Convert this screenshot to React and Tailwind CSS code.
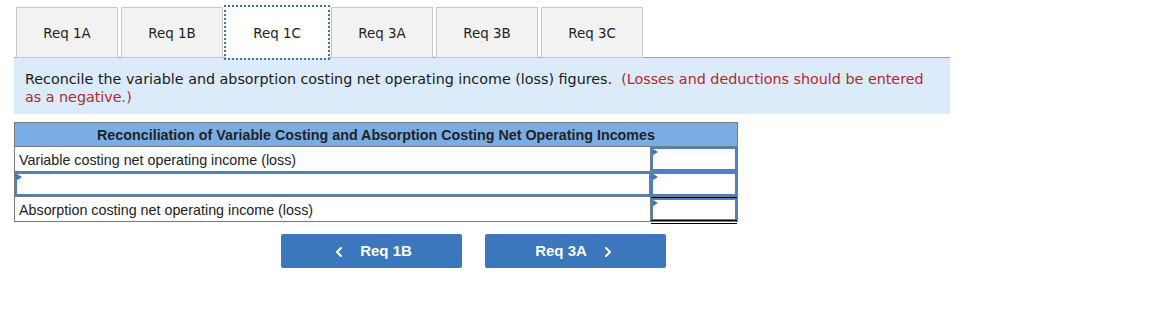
import React from 'react'
import { ChevronLeft, ChevronRight } from 'lucide-react'

const tabs = ['Req 1A', 'Req 1B', 'Req 1C', 'Req 3A', 'Req 3B', 'Req 3C']

const Marker = () => (
    <span className="absolute left-0 top-0 w-0 h-0 border-y-[3px] border-y-transparent border-l-[5px] border-l-[#3a74bd]" />
)

const InputCell = ({ total }) => (
    <div className={`relative h-full ${total ? 'border-t border-t-black' : ''}`}>
        <div className="relative h-full border-2 border-[#4c80c2]">
            <Marker />
        </div>
        {total ? <div className="absolute left-0 right-0 -bottom-[3px] h-[4px] border-y border-black" /> : null}
    </div>
)

const App = () => {
    return (
        <div className="w-[1173px] h-[316px] bg-white px-[14px] pt-[7px]" style={{ fontFamily: '"DejaVu Sans", Verdana, sans-serif' }}>
            <div className="flex gap-[3px] pl-[2px] border-b border-[#a3a3a3] w-[936px]">
                {tabs.map((t) => (
                    t === 'Req 1C' ? (
                        <div key={t} className="w-[102px] h-[51px] -mb-px pt-[3px] bg-white outline-2 outline-dotted outline-[#3a74bd] flex items-center justify-center text-[13.4px] text-[#222]">
                            {t}
                        </div>
                    ) : (
                        <div key={t} className="w-[102px] h-[51px] -mb-px pt-[3px] bg-[#f2f2f2] border border-[#c8c8c8] flex items-center justify-center text-[13.4px] text-[#222]">
                            {t}
                        </div>
                    )
                ))}
            </div>

            <div className="w-[936px] bg-[#dbebf9] pl-[11px] pr-3 pt-[12px] pb-[8px] text-[14.3px] leading-[18px] text-[#1a1a1a]">
                Reconcile the variable and absorption costing net operating income (loss) figures.&nbsp;&nbsp;<span className="text-[#b8262b]">(Losses and deductions should be entered as a negative.)</span>
            </div>

            <div className="mt-2 w-[724px] border border-[#7a7a7a]" style={{ fontFamily: '"Liberation Sans", Arial, sans-serif' }}>
                <div className="h-[24px] pt-[2px] bg-[#7badE5] border-b border-[#7a7a7a] flex items-center justify-center text-[14.3px] font-bold text-[#222]">
                    Reconciliation of Variable Costing and Absorption Costing Net Operating Incomes
                </div>
                <div className="grid grid-cols-[636px_1fr] h-[25px] border-b border-[#7a7a7a]">
                    <div className="border-r border-[#7a7a7a] pl-[4px] pt-[3px] flex items-center text-[14.3px] text-[#222]">
                        Variable costing net operating income (loss)
                    </div>
                    <InputCell />
                </div>
                <div className="grid grid-cols-[636px_1fr] h-[25px] border-b border-[#7a7a7a]">
                    <div className="relative border-2 border-[#4c80c2]">
                        <Marker />
                    </div>
                    <InputCell />
                </div>
                <div className="grid grid-cols-[636px_1fr] h-[24px]">
                    <div className="border-r border-[#7a7a7a] pl-[4px] pt-[3px] flex items-center text-[14.3px] text-[#222]">
                        Absorption costing net operating income (loss)
                    </div>
                    <InputCell total />
                </div>
            </div>

            <div className="flex gap-[23px] mt-[12px] ml-[267px]" style={{ fontFamily: '"Liberation Sans", Arial, sans-serif' }}>
                <button className="w-[181px] h-[34px] pt-px bg-[#3a77bd] rounded-[2px] text-white font-bold text-[15px] flex items-center justify-center gap-[13px]">
                    <ChevronLeft size={16} strokeWidth={3} />
                    <span>Req 1B</span>
                </button>
                <button className="w-[181px] h-[34px] pt-px bg-[#3a77bd] rounded-[2px] text-white font-bold text-[15px] flex items-center justify-center gap-[13px]">
                    <span>Req 3A</span>
                    <ChevronRight size={16} strokeWidth={3} />
                </button>
            </div>
        </div>
    )
}

export default App
